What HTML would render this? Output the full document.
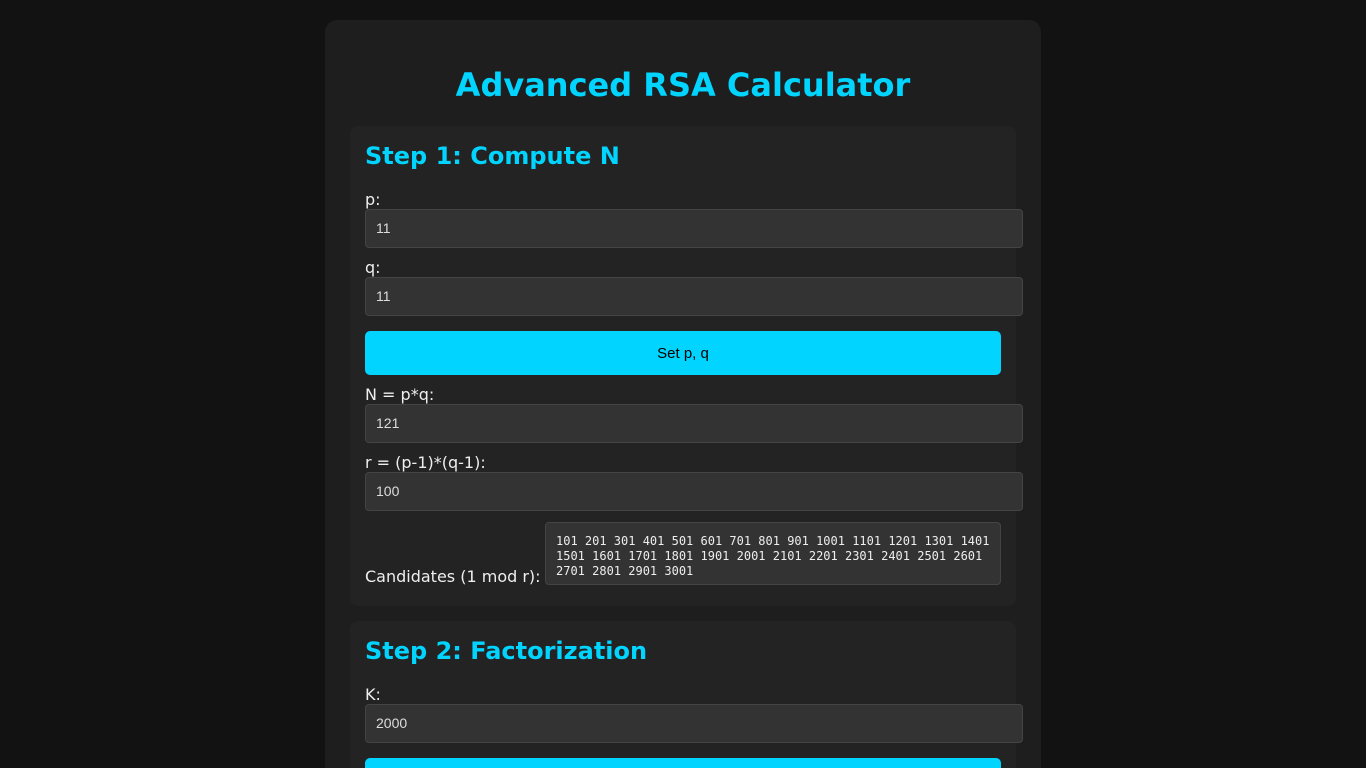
<!DOCTYPE html>
<html><head><meta charset="utf-8"><style>
html,body{margin:0;padding:0;height:768px;overflow:hidden;}
body{background:#121212;font-family:"DejaVu Sans",sans-serif;color:#eee;position:relative;}
.c{position:absolute;left:325px;top:20px;width:716px;height:748px;background:#1e1e1e;border-radius:12px 12px 0 0;overflow:hidden;}
h1{position:absolute;left:0;width:716px;top:45px;margin:0;text-align:center;color:#00d4ff;font-size:32px;font-weight:bold;line-height:40px;}
.s{position:absolute;left:25px;width:666px;background:#232323;border-radius:8px;}
h2{position:absolute;left:15px;margin:0;color:#00d4ff;font-size:24px;font-weight:bold;line-height:30px;}
.l{position:absolute;left:15px;font-size:16px;line-height:20px;color:#eee;}
.i{position:absolute;left:15px;height:37px;background:#333;border:1px solid #444;border-radius:4px;font-family:"Liberation Sans",sans-serif;font-size:14px;line-height:37px;padding-left:10px;width:646px;color:#ddd;}
.b{position:absolute;left:15px;width:636px;height:44px;background:#00d4ff;border-radius:5px;color:#000;font-family:"Liberation Sans",sans-serif;font-size:15px;line-height:46px;text-align:center;}
.t{position:absolute;left:195px;top:396px;width:434px;height:45px;background:#333;border:1px solid #444;border-radius:4px;padding:11px 10px 5px;font-family:"DejaVu Sans Mono",monospace;font-size:12px;line-height:15px;color:#eee;}
</style></head><body>
<div class="c">
<h1>Advanced RSA Calculator</h1>
<div class="s" style="top:106px;height:480px;">
<h2 style="top:15px">Step 1: Compute N</h2>
<div class="l" style="top:64px">p:</div>
<div class="i" style="top:83px">11</div>
<div class="l" style="top:132px">q:</div>
<div class="i" style="top:151px">11</div>
<div class="b" style="top:205px">Set p, q</div>
<div class="l" style="top:259px">N = p*q:</div>
<div class="i" style="top:278px">121</div>
<div class="l" style="top:327px">r = (p-1)*(q-1):</div>
<div class="i" style="top:346px">100</div>
<div class="l" style="top:441px">Candidates (1 mod r):</div>
<div class="t">101 201 301 401 501 601 701 801 901 1001 1101 1201 1301 1401 1501 1601 1701 1801 1901 2001 2101 2201 2301 2401 2501 2601 2701 2801 2901 3001</div>
</div>
<div class="s" style="top:601px;height:147px;border-radius:8px 8px 0 0;">
<h2 style="top:15px">Step 2: Factorization</h2>
<div class="l" style="top:64px">K:</div>
<div class="i" style="top:83px">2000</div>
<div class="b" style="top:137px;height:10px;border-radius:5px 5px 0 0;"></div>
</div>
</div>
</body></html>
